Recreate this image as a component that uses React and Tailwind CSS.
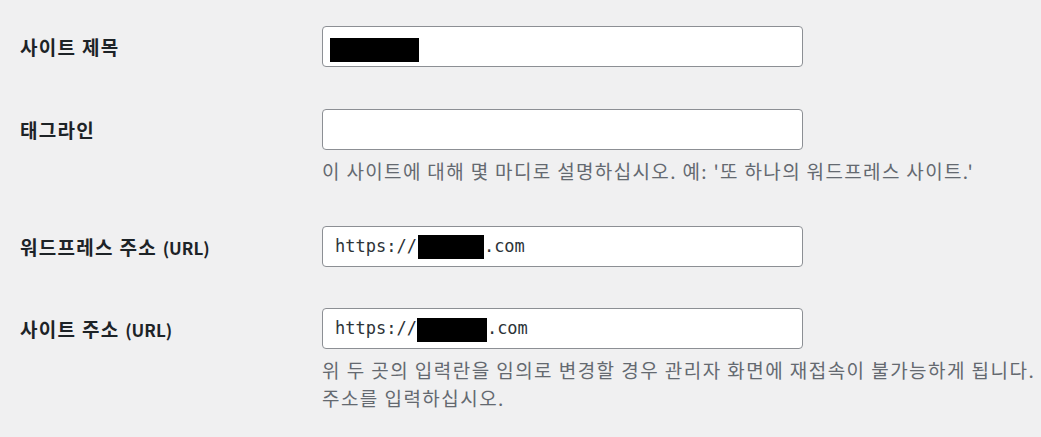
import React from 'react';

function Label({ children }) {
  return (
    <div className="flex h-[41px] w-[302px] flex-none items-center pt-[2px] text-[19px] font-semibold tracking-[1.3px] text-[#1d2327]">
      {children}
    </div>
  );
}

function Field({ className = '', children }) {
  return (
    <div className={`h-[41px] w-[481px] rounded-[4px] border border-[#8c8f94] bg-white ${className}`}>
      {children}
    </div>
  );
}

function UrlField({ boxWidth, boxClass }) {
  return (
    <Field className="flex items-center pl-[12px] font-['DejaVu_Sans_Mono',monospace] text-[17px] text-[#2c3338]">
      <span>https://</span>
      <span className={`inline-block h-[24px] bg-black ${boxWidth} ${boxClass}`} />
      <span>.com</span>
    </Field>
  );
}

function Desc({ className = '', children }) {
  return (
    <p className={`mt-[7px] whitespace-nowrap text-[19px] leading-[28px] text-[#646970] ${className}`}>
      {children}
    </p>
  );
}

export default function App() {
  return (
    <div className="min-h-screen overflow-hidden bg-[#f0f0f1] pl-5 font-['Noto_Sans_CJK_KR','Noto_Sans',sans-serif]">
      <div className="flex pt-[26px]">
        <Label>사이트 제목</Label>
        <Field className="pl-[7px] pt-[11px]">
          <div className="h-[24px] w-[89px] bg-black" />
        </Field>
      </div>

      <div className="mt-[42px] flex">
        <Label>태그라인</Label>
        <div>
          <Field />
          <Desc className="tracking-[1.35px]">
            이 사이트에 대해 몇 마디로 설명하십시오. 예: '또 하나의 워드프레스 사이트.'
          </Desc>
        </div>
      </div>

      <div className="mt-[41px] flex">
        <Label>
          워드프레스 주소&nbsp;<span className="text-[17px] tracking-normal">(URL)</span>
        </Label>
        <UrlField boxWidth="w-[66px]" boxClass="ml-[1px]" />
      </div>

      <div className="mt-[41px] flex">
        <Label>
          사이트 주소&nbsp;<span className="text-[17px] tracking-normal">(URL)</span>
        </Label>
        <div>
          <UrlField boxWidth="w-[70px]" boxClass="mt-[3px]" />
          <Desc className="tracking-[1.45px]">
            위 두 곳의 입력란을 임의로 변경할 경우 관리자 화면에 재접속이 불가능하게 됩니다.
            <br />
            주소를 입력하십시오.
          </Desc>
        </div>
      </div>
    </div>
  );
}
